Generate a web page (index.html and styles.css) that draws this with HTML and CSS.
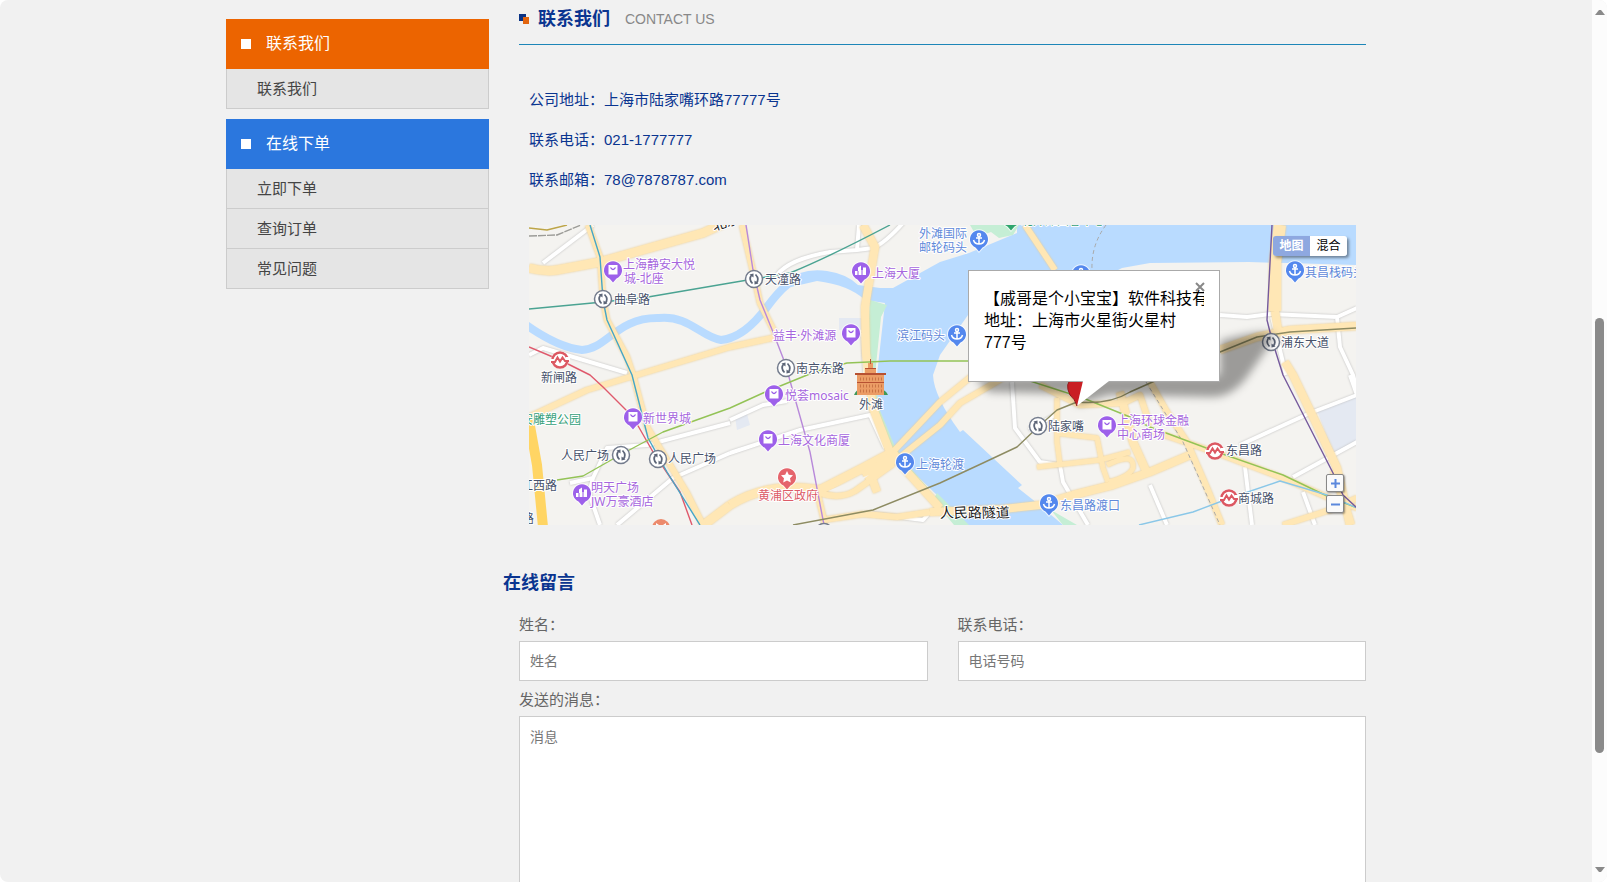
FILE: index.html
```html
<!DOCTYPE html>
<html lang="zh-CN">
<head>
<meta charset="utf-8">
<title>联系我们</title>
<link rel="stylesheet" href="styles.css">
</head>
<body>
<div class="window">
  <div class="page">
    <div class="container">
      <aside class="sidebar">
        <nav class="menu menu-orange">
          <h3 class="menu-title">联系我们</h3>
          <a class="menu-item" href="#contact">联系我们</a>
        </nav>
        <nav class="menu menu-blue">
          <h3 class="menu-title">在线下单</h3>
          <a class="menu-item" href="#order">立即下单</a>
          <a class="menu-item" href="#query">查询订单</a>
          <a class="menu-item" href="#faq">常见问题</a>
        </nav>
      </aside>
      <main class="main" id="contact">
        <header class="heading">
          <svg class="heading-mark" width="10" height="10" viewBox="0 0 10 10"><path fill="#0a3385" d="M0 0h7v7H0z"/><path fill="#e2650f" d="M4 3h6v7H4z"/></svg>
          <h2 class="heading-title">联系我们</h2>
          <span class="heading-sub">CONTACT US</span>
        </header>
        <div class="info">
          <p>公司地址：上海市陆家嘴环路77777号</p>
          <p>联系电话：021-1777777</p>
          <p>联系邮箱：78@7878787.com</p>
        </div>
        <section class="map">
          <svg class="map-canvas" viewBox="0 0 828 300" preserveAspectRatio="xMinYMin slice">
            <defs>
              <g id="pin-body"><path stroke="#fff" stroke-opacity=".7" paint-order="stroke" stroke-width="2" d="M0 12.500L-3.500 8.500A9 9 0 1 1 3.500 8.500Z"/></g>
              <g id="pin-bag"><use href="#pin-body" fill="#9d60ea"/><path fill="#fff" d="M-4.500-5h9V4.500h-9z"/><path fill="none" stroke="#9656e6" stroke-width="1.300" d="M-2.500-2.500Q0 1.500 2.500-2.500"/></g>
              <g id="pin-hotel"><use href="#pin-body" fill="#9d60ea"/><path fill="#fff" d="M-6 4V0h3v-3.500L0-5.500V-1h2v-2.500h3V4z"/><path stroke="#9656e6" d="M-3 0v4M1-1v5"/></g>
              <g id="pin-anchor"><use href="#pin-body" fill="#5488ee"/><g fill="none" stroke="#fff" stroke-width="1.500"><circle cy="-4" r="1.500"/><path d="M0-2.500V5M-3-1h6M-5.500 1Q-4.500 5 0 5T5.500 1"/></g></g>
              <g id="metro"><circle r="8.500" fill="#fff" stroke="#747c8d" stroke-width="1.500"/><path fill="none" stroke="#5d6678" stroke-width="1.700" d="M-1.500 4.500Q-6 0-2-4.500M1.500-4.500Q6 0 2 4.500"/><path fill="#5d6678" d="M-4.500-4.500l4-1v4zM4.500 4.500l-4 1v-4z"/></g>
              <g id="metro-red"><circle r="9" fill="#fff"/><circle r="7.500" fill="none" stroke="#dc5862" stroke-width="2.500"/><path fill="none" stroke="#fff" stroke-width="4" d="M-10 1h4M6-1h4"/><path fill="none" stroke="#dc5862" stroke-width="2" d="M-9 2h4L-2.500-2.500 0 1.500 2.500-2.500 5 1h4"/></g>
              <filter id="soft" x="-10%" y="-50%" width="120%" height="200%"><feGaussianBlur stdDeviation="4"/></filter>
            </defs>
            <rect width="828" height="300" fill="#f4f3f0"/>
            <path fill="#e4e9f2" d="M788 185L828 171V215L804 229zM206 192L218 189 221 200 208 205zM310 93h24v12h-24z"/>
            <path class="creek" d="M-4 99Q28 122 53 125C78 124 88 92 130 93C160 90 172 112 192 115Q215 113 238 82T272 55"/>
            <path fill="#b9dbff" d="M251 58Q274 42 298 46 318 49 329 60L351 63H364L411 37 440 28 488 8V0H828V40L720 37 621 38 593 43 560 60 439 90 411 130 404 150Q405 172 431 207L434 205 493 260 489 263 508 278 534 300H438L411 273 384 247 364 223 348 183V150L356 78 336 75Q320 60 288 56L262 62z"/>
            <path fill="#c5eed5" d="M341 75L358 80 352 92 346 150 350 183 366 222 384 246 400 264 396 266 362 225 342 180 339 110zM441 0H490L484 10 470 13 462 7 448 12zM408 268L440 300H425L404 275zM522 285L548 300H534z"/>
            <g class="streets">
              <path d="M14 38L64 0M0 130L14 123 98 148M248 50Q260 34 301 27L328 25 344 23Q356 18 374 -2M328 25L330 0M201 228L271 205 341 190 356 223M201 195L234 180 258 176M41 258L64 253 78 223 118 220 201 198M64 253L60 268 71 300M88 300L144 253 201 228M483 157L486 203 511 237 531 240 534 257 559 300M526 190L500 205M821 150L828 170 781 188 711 220M828 217L764 252M716 242L723 300M621 260L638 300M774 267L786 300M691 90L718 92 741 89 808 92 828 83M808 92L811 122 824 150 828 165M334 108L336 148M743 92L757 150M338 288L394 295 401 287"/>
            </g>
            <g class="roads">
              <path stroke-width="9" d="M0 43Q16 47 28 45L71 37 124 22 174 8 196-2M201 280Q240 256 291 265L334 243 364 227M172 302L201 280"/>
              <path stroke-width="6" d="M59 0L71 32 74 75 78 95 98 132 104 150 118 202 138 235 158 268 175 302M213 0L226 55 231 78 246 108M496 0L526 45M621 157L638 187 658 217 678 263 693 300M621 205L688 228 754 253 798 272 828 283M621 200L611 170 594 178 551 180 511 160"/>
              <path stroke-width="6" d="M0 192L58 165 101 152 201 122 248 112M361 230L411 177 444 150M366 236L411 200 431 178 474 153M291 268Q310 275 326 266L364 239M289 270L296 300M294 295L334 289 368 292 401 287M754 300L801 285 828 273"/>
              <path stroke-width="5" d="M528 173V217L531 240M508 242L544 238 571 235 601 227M526 208L568 213 574 243 579 257M578 240Q606 226 604 243 600 252 580 257"/>
              <path stroke-width="8" d="M334 0L346 22 341 52 336 82 337 128 344 183 361 227 381 250 411 283M341 248L348 267M591 167L604 217 619 250M401 287L474 284 511 280 544 270 584 260 621 247 661 230M691 125L728 112 761 105 828 101M746 86L749 105M756 137L764 150 788 200 808 243 821 300M805 245L822 300"/>
              <path stroke-width="12" d="M751 0L746 38V86M336 253L370 229"/>
            </g>
            <path fill="#f4f3f0" d="M299 266L340 250 320 264z"/>
            <path class="highway" d="M-1 190L8 240 14 302"/>
            <g class="lines" stroke-width="1.400">
              <path stroke="#bda548" d="M0 3L18 5 38 0"/>
              <path stroke="#9c9c98" stroke-dasharray="8 1" d="M0 11L28 10 52 0"/>
              <path stroke="#aaa" stroke-width="1" stroke-dasharray="4 3" d="M617 157L654 217 691 300M577 0Q562 20 563 45"/>
              <path stroke="#4aa392" d="M0 84L74 77 119 72 201 58 261 48Q300 32 361 0"/>
              <path stroke="#df596c" d="M0 122L31 135 61 150 74 162 104 192 124 227 151 267 163 300"/>
              <path stroke="#45a6c7" d="M61 0L71 32 74 75 78 95 103 150 119 213 138 247 171 300"/>
              <path stroke="#b889da" d="M217 0L224 45 231 75 244 107 256 138 281 227 295 300"/>
              <path stroke="#93c356" d="M28 255L54 251 91 230 134 207 201 183 234 168 288 146 318 138 361 136H439M439 136L554 173 601 192 621 202 688 227 754 250 798 271 828 283"/>
              <path stroke="#8d8b62" d="M264 300L344 285 411 258 454 238 488 222 509 202 528 185 548 177Q580 180 601 167L691 127 728 112 761 107 828 103"/>
              <path stroke="#8ac7e8" d="M610 300L664 287 701 273 751 256 798 270 828 283"/>
              <path stroke="#75599c" d="M743 0L738 95 743 115 754 150 804 248 814 270 828 283"/>
            </g>
            <g>
              <path fill="#409858" d="M325 170q2-6 8-6l10 3 8-3q6 1 8 6z"/>
              <path fill="#eb9c65" d="M328 150h27v20h-27zM336 144h11v8h-11zM339 138h5v7h-5z"/>
              <path fill="#b75132" d="M326 148h31v2h-31zM328 157h27v1h-27zM336 143h11v1h-11zM341 134h1v5h-1z"/>
              <path stroke="#c97546" stroke-width="3" stroke-dasharray="1 2" d="M331 154h23M331 161h23M331 166h23"/>
            </g>
            <use href="#metro" x="74" y="74"/><use href="#metro" x="225" y="54"/><use href="#metro" x="257" y="143"/><use href="#metro" x="92" y="230"/><use href="#metro" x="129" y="234"/><use href="#metro" x="509" y="201"/><use href="#metro" x="742" y="117"/><use href="#metro" x="295" y="307"/>
            <use href="#metro-red" x="31" y="135"/><use href="#metro-red" x="686" y="226"/><use href="#metro-red" x="700" y="273"/>
            <use href="#pin-bag" x="84" y="45"/><use href="#pin-bag" x="322" y="108"/><use href="#pin-bag" x="104" y="192"/><use href="#pin-bag" x="245" y="169"/><use href="#pin-bag" x="239" y="214"/><use href="#pin-bag" x="578" y="200"/>
            <use href="#pin-hotel" x="332" y="46"/><use href="#pin-hotel" x="53" y="268"/>
            <use href="#pin-anchor" x="450" y="14"/><use href="#pin-anchor" x="428" y="109"/><use href="#pin-anchor" x="376" y="237"/><use href="#pin-anchor" x="520" y="278"/><use href="#pin-anchor" x="766" y="45"/><use href="#pin-anchor" x="552" y="49"/>
            <use href="#pin-body" x="482" y="-7" fill="#2fa56d"/>
            <circle cx="132" cy="303" r="9" fill="#ec8a6c"/><path fill="#fff" d="M127 298l3 2h4l3-2v4h-10z"/>
            <use href="#pin-body" x="258" y="252" fill="#e5646c"/><path fill="#fff" d="M258 246l1.800 3.800 4.200.5-3 2.900.8 4.200-3.800-2-3.800 2 .8-4.200-3-2.900 4.200-.5z"/>
            <g class="label">
              <text x="85" y="79">曲阜路</text><text x="236" y="59">天潼路</text><text x="267" y="148">南京东路</text><text x="12" y="157">新闸路</text><text x="32" y="235">人民广场</text><text x="139" y="238">人民广场</text><text x="-8" y="265">江西路</text><text x="-7" y="298">路</text><text x="330" y="184">外滩</text><text x="519" y="206">陆家嘴</text><text x="697" y="230">东昌路</text><text x="709" y="278">商城路</text><text x="752" y="122">浦东大道</text>
            </g>
            <g class="label label-mall">
              <text x="94" y="44">上海静安大悦</text><text x="95" y="58">城-北座</text><text x="343" y="53">上海大厦</text><text x="244" y="115">益丰·外滩源</text><text x="114" y="198">新世界城</text><text x="62" y="267">明天广场</text><text x="62" y="281">JW万豪酒店</text><text x="256" y="175">悦荟mosaic</text><text x="249" y="220">上海文化商厦</text><text x="588" y="200">上海环球金融</text><text x="588" y="214">中心商场</text>
            </g>
            <g class="label label-pier">
              <text x="390" y="13">外滩国际</text><text x="390" y="27">邮轮码头</text><text x="368" y="115">滨江码头</text><text x="387" y="244">上海轮渡</text><text x="531" y="285">东昌路渡口</text><text x="776" y="52">其昌栈码头</text>
            </g>
            <g class="label label-park"><text x="-8" y="199">安雕塑公园</text><text x="492" y="0">北外滩国客中心</text></g>
            <g class="label label-gov"><text x="229" y="275">黄浦区政府</text></g>
            <g class="label label-road"><text x="411" y="293" rotate="-3">人民路隧道</text><text x="185" y="6" transform="rotate(-18 185 6)">北京</text></g>
            <path filter="url(#soft)" fill="#000" fill-opacity=".36" d="M445 152L460 167 545 169 548 180 580 170 684 172Q704 171 718 152L746 112Q741 102 691 116V150z"/>
            <path fill="#c91f24" stroke="#8e1a1c" d="M548 181Q546 174 541 170 535 158 544 153H554Q560 162 554 170z"/>
          </svg>
          <div class="popup">
            <p class="popup-name">【戚哥是个小宝宝】软件科技有限公司</p>
            <p>地址：上海市火星街火星村<br>777号</p>
            <button class="popup-close" type="button" aria-label="关闭"><svg width="10" height="10" viewBox="0 0 10 10"><path stroke="#888" stroke-width="2" d="M1 1l8 8M9 1L1 9"/></svg></button>
            <svg class="popup-tail" width="34" height="26" viewBox="0 0 34 26"><path fill="#fff" d="M7 0H33L1 25z"/></svg>
          </div>
          <div class="map-type"><button class="type-on" type="button">地图</button><button type="button">混合</button></div>
          <div class="map-zoom">
            <button type="button" aria-label="放大"><svg width="9" height="9" viewBox="0 0 9 9"><path stroke="#5b88dc" stroke-width="2" d="M0 4.500h9M4.500 0v9"/></svg></button>
            <button type="button" aria-label="缩小"><svg width="9" height="9" viewBox="0 0 9 9"><path stroke="#5b88dc" stroke-width="2" d="M0 4.500h9"/></svg></button>
          </div>
        </section>
        <h2 class="form-title">在线留言</h2>
        <form class="form">
          <div class="field"><label for="name">姓名：</label><input id="name" type="text" placeholder="姓名"></div>
          <div class="field"><label for="phone">联系电话：</label><input id="phone" type="tel" placeholder="电话号码"></div>
          <div class="field field-wide"><label for="message">发送的消息：</label><textarea id="message" placeholder="消息"></textarea></div>
        </form>
      </main>
    </div>
  </div>
  <div class="scrollbar">
    <svg width="10" height="5" viewBox="0 0 10 5"><path fill="#8a8a8a" d="M0 5L4 0H6L10 5z"/></svg>
    <div class="track"><div class="thumb"></div></div>
    <svg width="10" height="5" viewBox="0 0 10 5"><path fill="#8a8a8a" d="M0 0L4 5H6L10 0z"/></svg>
  </div>
</div>
</body>
</html>
```
FILE: styles.css
```css
* { box-sizing: border-box; }
body, h2, h3, p { margin: 0; }
body {
  background: #fff;
  font-family: "Liberation Sans", "Noto Sans CJK SC", sans-serif;
  font-size: 15px;
  color: #666;
}
button, input, textarea { font-family: inherit; }

.window {
  display: flex;
  height: 100vh;
  overflow: hidden;
  border-radius: 8px;
  background: #f1f1f1;
}
.page { flex: 1; overflow: hidden; }
.container {
  display: grid;
  grid-template-columns: 263px minmax(0, 1fr);
  gap: 30px;
  max-width: 1170px;
  margin: 0 auto;
  padding: 0 15px;
}

.sidebar { padding-top: 19px; }
.menu { margin-bottom: 10px; }
.menu-title {
  display: flex;
  align-items: center;
  gap: 15px;
  padding-left: 15px;
  line-height: 50px;
  font-size: 16px;
  font-weight: normal;
  color: #fff;
}
.menu-title::before { content: ""; width: 10px; height: 10px; background: #fff; }
.menu-orange .menu-title { background: #ec6400; }
.menu-blue .menu-title { background: #2b77de; }
.menu-item {
  display: block;
  padding-left: 30px;
  line-height: 39px;
  background: #e5e5e5;
  border: 1px solid #ccc;
  border-top: 0;
  color: #444;
  text-decoration: none;
}

.heading {
  display: flex;
  align-items: center;
  padding: 7px 0 13px;
  border-bottom: 1px solid #1d86b8;
  line-height: 24px;
}
.heading-title { margin: 0 15px 0 9px; font-size: 18px; color: #0a3590; }
.heading-sub { font-size: 14px; color: #888; }
.info { padding: 35px 10px 25px; line-height: 40px; color: #0a3590; }

.map { position: relative; height: 300px; margin: 0 10px; overflow: hidden; }
.map-canvas { display: block; width: 100%; height: 100%; }
.creek { fill: none; stroke: #b9dbff; stroke-width: 8px; }
.streets { fill: none; stroke: #fff; stroke-width: 4px; stroke-linejoin: round; filter: drop-shadow(0 0 1px #bbb); }
.roads { fill: none; stroke: #ffe7b5; stroke-linejoin: round; filter: drop-shadow(0 0 1px #eacb8e); }
.highway { fill: none; stroke: #ffd564; stroke-width: 10px; }
.lines { fill: none; stroke-linejoin: round; }
.label {
  font-family: "Noto Sans", "Noto Sans CJK SC", sans-serif;
  font-size: 12px;
  fill: #47526b;
  stroke: #fff;
  stroke-width: 2px;
  stroke-linejoin: round;
  paint-order: stroke;
}
.label-mall { fill: #a666dd; }
.label-pier { fill: #6189d9; }
.label-park { fill: #35a079; }
.label-gov { fill: #dc5c68; }
.label-road { font-size: 14px; fill: #222; }

.popup {
  position: absolute;
  left: 439px;
  top: 45px;
  width: 252px;
  height: 112px;
  padding: 17px 15px;
  background: #fff;
  border: 1px solid #aaa;
  font-size: 16px;
  line-height: 22px;
  color: #000;
}
.popup-name { overflow: hidden; white-space: nowrap; }
.popup-close {
  position: absolute;
  top: 11px;
  right: 14px;
  display: flex;
  padding: 0;
  border: 0;
  background: none;
}
.popup-tail { position: absolute; left: 107px; top: 110px; }

.map-type {
  position: absolute;
  top: 11px;
  right: 9px;
  display: flex;
  border-radius: 3px;
  overflow: hidden;
  box-shadow: 2px 2px 3px #0006;
}
.map-type button {
  width: 37px;
  padding: 0;
  border: 0;
  background: #fff;
  font-size: 12px;
  line-height: 20px;
  color: #000;
}
.map-type .type-on { background: #8ea8e0; color: #fff; font-weight: bold; }
.map-zoom {
  position: absolute;
  right: 12px;
  bottom: 12px;
  display: grid;
  gap: 3px;
}
.map-zoom button {
  display: grid;
  place-items: center;
  width: 18px;
  height: 18px;
  padding: 0;
  border: 1px solid #888;
  border-radius: 2px;
  background: #fafafa;
  box-shadow: 1px 1px 2px #0006;
}

.form-title { margin: 46px 0 20px -16px; font-size: 18px; line-height: 24px; color: #0a3590; }
.form { display: grid; grid-template-columns: 1fr 1fr; gap: 9px 30px; }
.field { display: flex; flex-direction: column; gap: 6px; line-height: 20px; }
.field-wide { grid-column: span 2; }
.field input, .field textarea {
  width: 100%;
  border: 1px solid #ccc;
  border-radius: 0;
  background: #fff;
  padding: 10px;
  font-size: 14px;
  line-height: 20px;
}
.field input { height: 40px; }
.field textarea { height: 200px; resize: none; }
::placeholder { color: #777; }

.scrollbar {
  display: flex;
  flex-direction: column;
  align-items: center;
  justify-content: space-between;
  width: 15px;
  padding: 10px 0;
  background: #fcfcfc;
}
.track { flex: 1; padding-top: 303px; }
.thumb { width: 9px; height: 435px; border-radius: 5px; background: #8a8a8a; }
```
